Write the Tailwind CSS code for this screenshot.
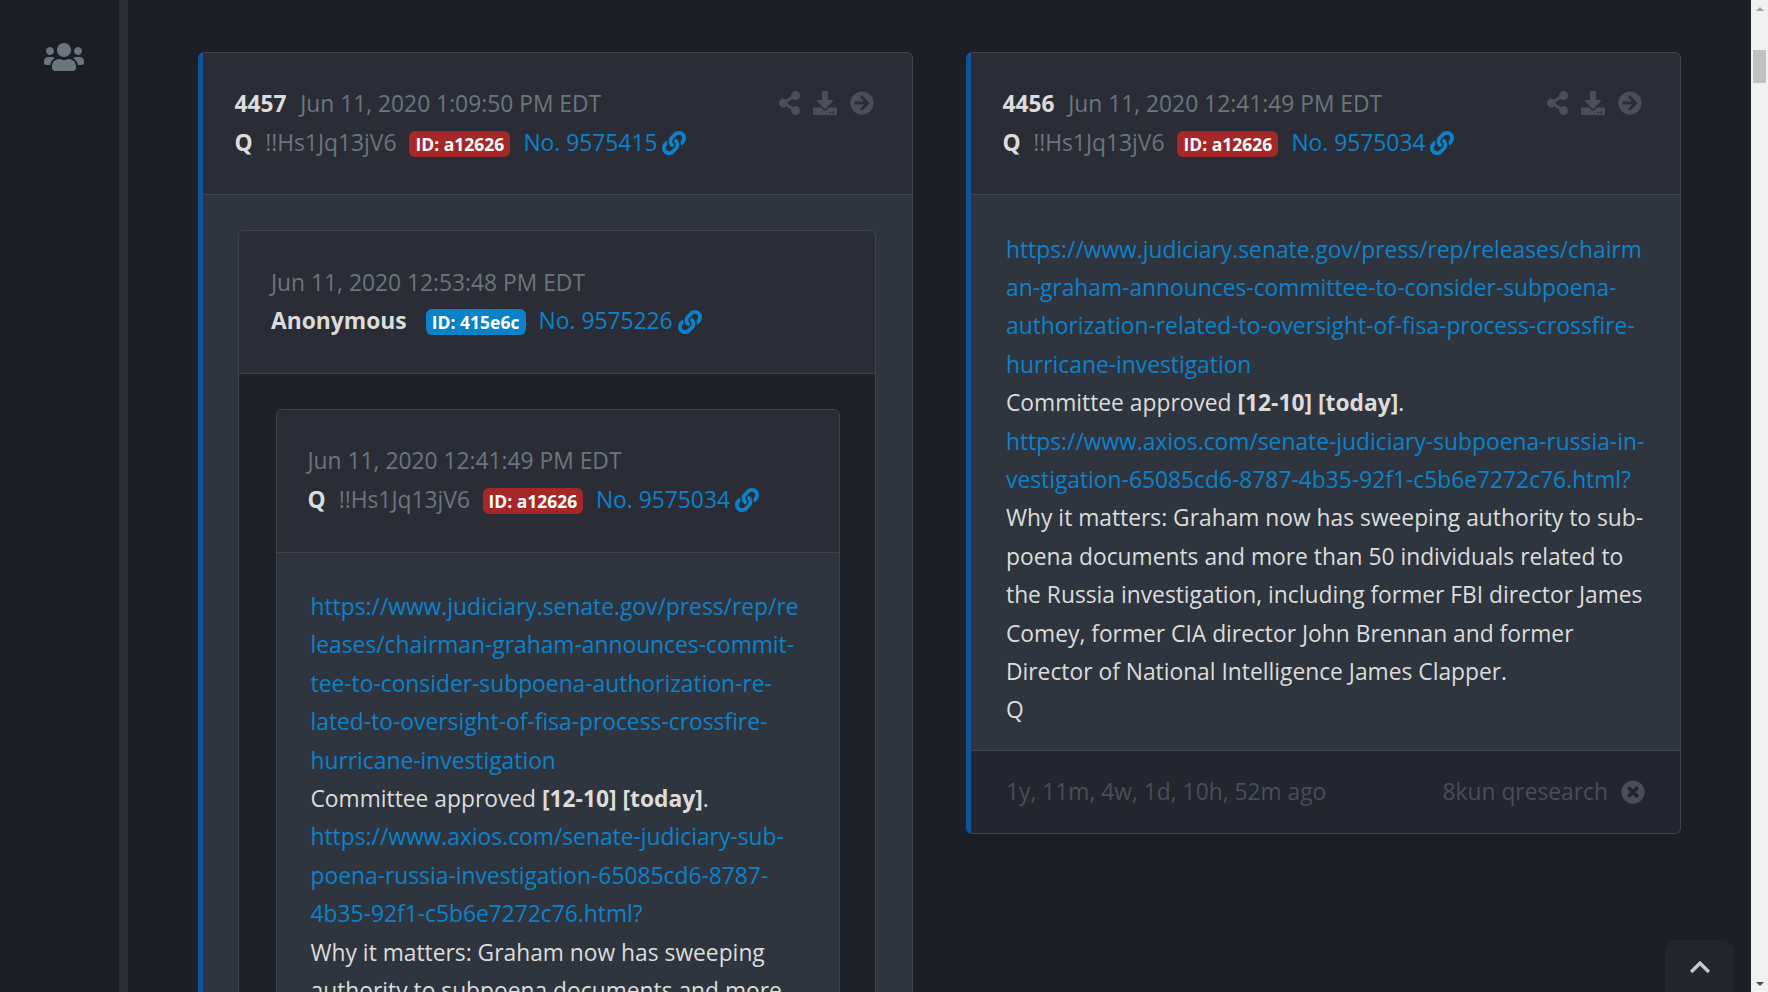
<!DOCTYPE html>
<html lang="en">
<head>
    <meta charset="UTF-8">
    <title>Q posts</title>
    <script src="https://cdn.jsdelivr.net/npm/@tailwindcss/browser@4"></script>
</head>
<body class="h-screen overflow-hidden bg-[#1c1f26] font-['Open_Sans',sans-serif] text-[22.8px] leading-[38.4px] text-[#dcdcdc]">
    <svg class="hidden">
        <symbol id="i-users" viewBox="0 0 640 512"><path fill="currentColor" d="M96 224c35.3 0 64-28.7 64-64s-28.7-64-64-64-64 28.7-64 64 28.7 64 64 64zm448 0c35.3 0 64-28.7 64-64s-28.7-64-64-64-64 28.7-64 64 28.7 64 64 64zm32 32h-64c-17.6 0-33.5 7.1-45.1 18.6 40.3 22.1 68.9 62 75.1 109.4h66c17.7 0 32-14.3 32-32v-32c0-35.3-28.7-64-64-64zm-256 0c61.9 0 112-50.1 112-112S381.9 32 320 32 208 82.1 208 144s50.1 112 112 112zm76.8 32h-8.3c-20.8 10-43.9 16-68.5 16s-47.6-6-68.5-16h-8.3C179.6 288 128 339.6 128 403.2V432c0 26.5 21.5 48 48 48h288c26.5 0 48-21.5 48-48v-28.8c0-63.6-51.6-115.2-115.2-115.2zm-223.7-13.4C161.5 263.1 145.6 256 128 256H64c-35.3 0-64 28.7-64 64v32c0 17.7 14.3 32 32 32h65.9c6.3-47.4 34.9-87.3 75.2-109.4z"/></symbol>
        <symbol id="i-share" viewBox="0 0 448 512"><path fill="currentColor" d="M352 320c-22.608 0-43.387 7.819-59.79 20.895l-102.486-64.054a96.551 96.551 0 0 0 0-41.683l102.486-64.054C308.613 184.181 329.392 192 352 192c53.019 0 96-42.981 96-96S405.019 0 352 0s-96 42.981-96 96c0 7.158.79 14.13 2.276 20.841L155.79 180.895C139.387 167.819 118.608 160 96 160c-53.019 0-96 42.981-96 96s42.981 96 96 96c22.608 0 43.387-7.819 59.79-20.895l102.486 64.054A96.301 96.301 0 0 0 256 416c0 53.019 42.981 96 96 96s96-42.981 96-96-42.981-96-96-96z"/></symbol>
        <symbol id="i-download" viewBox="0 0 512 512"><path fill="currentColor" d="M216 0h80c13.3 0 24 10.7 24 24v168h87.7c17.8 0 26.7 21.5 14.1 34.1L269.7 378.3c-7.5 7.5-19.8 7.5-27.3 0L90.1 226.1c-12.6-12.6-3.7-34.1 14.1-34.1H192V24c0-13.3 10.7-24 24-24zm296 376v112c0 13.3-10.7 24-24 24H24c-13.3 0-24-10.7-24-24V376c0-13.3 10.7-24 24-24h146.7l49 49c20.1 20.1 52.5 20.1 72.6 0l49-49H488c13.3 0 24 10.7 24 24zm-124 88c0-11-9-20-20-20s-20 9-20 20 9 20 20 20 20-9 20-20zm64 0c0-11-9-20-20-20s-20 9-20 20 9 20 20 20 20-9 20-20z"/></symbol>
        <symbol id="i-arrow" viewBox="0 0 512 512"><path fill="currentColor" d="M256 8c137 0 248 111 248 248S393 504 256 504 8 393 8 256 119 8 256 8zm-28.9 143.6l75.5 72.4H120c-13.3 0-24 10.7-24 24v16c0 13.3 10.7 24 24 24h182.6l-75.5 72.4c-9.7 9.3-9.9 24.8-.4 34.3l11 10.9c9.4 9.4 24.6 9.4 33.9 0L404.3 273c9.4-9.4 9.4-24.6 0-33.9L271.6 106.3c-9.4-9.4-24.6-9.4-33.9 0l-11 10.9c-9.5 9.6-9.3 25.1.4 34.4z"/></symbol>
        <symbol id="i-link" viewBox="0 0 512 512"><path fill="currentColor" d="M326.612 185.391c59.747 59.809 58.927 155.698.36 214.59-.11.12-.24.25-.36.37l-67.2 67.2c-59.27 59.27-155.699 59.262-214.96 0-59.27-59.26-59.27-155.7 0-214.96l37.106-37.106c9.84-9.84 26.786-3.3 27.294 10.606.648 17.722 3.826 35.527 9.69 52.721 1.986 5.822.567 12.262-3.783 16.612l-13.087 13.087c-28.026 28.026-28.905 73.66-1.155 101.96 28.024 28.579 74.086 28.749 102.325.51l67.2-67.19c28.191-28.191 28.073-73.757 0-101.83-3.701-3.694-7.429-6.564-10.341-8.569a16.037 16.037 0 0 1-6.947-12.606c-.396-10.567 3.348-21.456 11.698-29.806l21.054-21.055c5.521-5.521 14.182-6.199 20.584-1.731a152.482 152.482 0 0 1 20.522 17.197zM467.547 44.449c-59.261-59.262-155.69-59.27-214.96 0l-67.2 67.2c-.12.12-.25.25-.36.37-58.566 58.892-59.387 154.781.36 214.59a152.454 152.454 0 0 0 20.521 17.196c6.402 4.468 15.064 3.789 20.584-1.731l21.054-21.055c8.35-8.35 12.094-19.239 11.698-29.806a16.037 16.037 0 0 0-6.947-12.606c-2.912-2.005-6.64-4.875-10.341-8.569-28.073-28.073-28.191-73.639 0-101.83l67.2-67.19c28.239-28.239 74.3-28.069 102.325.51 27.75 28.3 26.872 73.934-1.155 101.96l-13.087 13.087c-4.35 4.35-5.769 10.79-3.783 16.612 5.864 17.194 9.042 34.999 9.69 52.721.509 13.906 17.454 20.446 27.294 10.606l37.106-37.106c59.271-59.259 59.271-155.699.001-214.959z"/></symbol>
        <symbol id="i-times" viewBox="0 0 512 512"><path fill="currentColor" d="M256 8C119 8 8 119 8 256s111 248 248 248 248-111 248-248S393 8 256 8zm121.6 313.1c4.7 4.7 4.7 12.3 0 17L338 377.6c-4.7 4.7-12.3 4.7-17 0L256 312l-65.1 65.6c-4.7 4.7-12.3 4.7-17 0L134.4 338c-4.7-4.7-4.7-12.3 0-17l65.6-65-65.6-65.1c-4.7-4.7-4.7-12.3 0-17l39.6-39.6c4.7-4.7 12.3-4.7 17 0l65 65.7 65.1-65.6c4.7-4.7 12.3-4.7 17 0l39.6 39.6c4.7 4.7 4.7 12.3 0 17L312 256l65.6 65.1z"/></symbol>
        <symbol id="i-chevron" viewBox="0 0 448 512"><path fill="currentColor" d="M240.971 130.524l194.343 194.343c9.373 9.373 9.373 24.569 0 33.941l-22.667 22.667c-9.357 9.357-24.522 9.375-33.901.04L224 227.495 69.255 381.516c-9.379 9.335-24.544 9.317-33.901-.04l-22.667-22.667c-9.373-9.373-9.373-24.569 0-33.941L207.03 130.525c9.372-9.373 24.568-9.373 33.941-.001z"/></symbol>
    </svg>

    <div class="flex h-screen">
        <!-- sidebar -->
        <aside class="w-[119px] shrink-0 bg-[#1b1e25] pt-[41px] pl-[9px] flex justify-center">
            <svg class="w-10 h-8 text-[#6c757d]"><use href="#i-users"/></svg>
        </aside>
        <div class="w-[9px] shrink-0 bg-[#2a2d35]"></div>

        <!-- posts -->
        <main class="flex-1 flex items-start gap-[53px] pl-[70px] pt-[52px] overflow-hidden">
            <article class="w-[715px] shrink-0 rounded-md border border-[#3f434c] border-l-[5px] border-l-[#0f539c] overflow-hidden">
                <header class="bg-[#2a2d35] border-b border-[#3f434c] pl-[31.5px] pr-[30px] py-8 h-[142px] flex justify-between">
                    <div>
                        <div class="flex items-center">
                            <span class="font-bold text-[#dcdcdc] mr-[13.5px]">4457</span>
                            <span class="text-[#6c757d]">Jun 11, 2020 1:09:50 PM EDT</span>
                        </div>
                        <div class="flex items-center mt-[0.6px]">
                            <span class="font-bold mr-[12.5px]">Q</span>
                            <span class="text-[#6c757d] mr-[13px]">!!Hs1Jq13jV6</span>
                            <span class="mt-[1px] h-[26px] w-[101px] rounded-md bg-[#a52727] text-white font-bold text-[17.5px] leading-[26px] text-center mr-[13px]">ID: a12626</span>
                            <a class="text-[#0b82cc] flex items-center gap-[5px]">No. 9575415 <svg class="w-6 h-6"><use href="#i-link"/></svg></a>
                        </div>
                    </div>
                    <div class="flex gap-[13px] h-[38px] items-center pr-[8px] -mt-[1px] text-[#4a4e5a]">
                        <svg class="w-[21px] h-6"><use href="#i-share"/></svg>
                        <svg class="w-6 h-6"><use href="#i-download"/></svg>
                        <svg class="w-6 h-6"><use href="#i-arrow"/></svg>
                    </div>
                </header>
                <div class="bg-[#2f353e] pl-[35px] pr-[36px] pt-[35px] h-[900px]">
                    <section class="rounded-md border border-[#3f434c]">
                        <header class="bg-[#2a2d35] border-b border-[#3f434c] rounded-t-md px-[32px] pt-[33px] h-[143px]">
                            <div class="text-[#6c757d]">Jun 11, 2020 12:53:48 PM EDT</div>
                            <div class="flex items-center">
                                <span class="font-bold mr-[19px]">Anonymous</span>
                                <span class="h-[26px] w-[100px] rounded-md bg-[#0a82c8] text-white font-bold text-[17.5px] leading-[26px] text-center mr-[13px]">ID: 415e6c</span>
                                <a class="text-[#0b82cc] flex items-center gap-[5px]">No. 9575226 <svg class="w-6 h-6"><use href="#i-link"/></svg></a>
                            </div>
                        </header>
                        <div class="bg-[#1e2128] pl-[36.5px] pr-[35px] pt-[35px] pb-8">
                            <section class="rounded-md border border-[#3f434c]">
                                <header class="bg-[#2a2d35] border-b border-[#3f434c] rounded-t-md px-[31px] pt-[32px] h-[143px]">
                                    <div class="text-[#6c757d]">Jun 11, 2020 12:41:49 PM EDT</div>
                                    <div class="flex items-center mt-[0.6px]">
                                        <span class="font-bold mr-[13px]">Q</span>
                                        <span class="text-[#6c757d] mr-[13px]">!!Hs1Jq13jV6</span>
                                        <span class="mt-[1px] h-[26px] w-[100px] rounded-md bg-[#a52727] text-white font-bold text-[17.5px] leading-[26px] text-center mr-[13px]">ID: a12626</span>
                                        <a class="text-[#0b82cc] flex items-center gap-[5px]">No. 9575034 <svg class="w-6 h-6"><use href="#i-link"/></svg></a>
                                    </div>
                                </header>
                                <div class="bg-[#2f353e] px-[34px] pt-[35px] pb-[35px]">
                                    <a class="text-[#0b82cc]">https://www.judiciary.senate.gov/press/rep/re<br>leases/chairman-graham-announces-commit-<br>tee-to-consider-subpoena-authorization-re-<br>lated-to-oversight-of-fisa-process-crossfire-<br>hurricane-investigation</a><br>
                                    Committee approved <b>[12-10] [today]</b>.<br>
                                    <a class="text-[#0b82cc]">https://www.axios.com/senate-judiciary-sub-<br>poena-russia-investigation-65085cd6-8787-<br>4b35-92f1-c5b6e7272c76.html?</a><br>
                                    Why it matters: Graham now has sweeping<br>authority to subpoena documents and more
                                </div>
                            </section>
                        </div>
                    </section>
                </div>
            </article>

            <article class="w-[715px] shrink-0 rounded-md border border-[#3f434c] border-l-[5px] border-l-[#0f539c] overflow-hidden">
                <header class="bg-[#2a2d35] border-b border-[#3f434c] pl-[31.5px] pr-[30px] py-8 h-[142px] flex justify-between">
                    <div>
                        <div class="flex items-center">
                            <span class="font-bold text-[#dcdcdc] mr-[13.5px]">4456</span>
                            <span class="text-[#6c757d]">Jun 11, 2020 12:41:49 PM EDT</span>
                        </div>
                        <div class="flex items-center mt-[0.6px]">
                            <span class="font-bold mr-[12.5px]">Q</span>
                            <span class="text-[#6c757d] mr-[13px]">!!Hs1Jq13jV6</span>
                            <span class="mt-[1px] h-[26px] w-[101px] rounded-md bg-[#a52727] text-white font-bold text-[17.5px] leading-[26px] text-center mr-[13px]">ID: a12626</span>
                            <a class="text-[#0b82cc] flex items-center gap-[5px]">No. 9575034 <svg class="w-6 h-6"><use href="#i-link"/></svg></a>
                        </div>
                    </div>
                    <div class="flex gap-[13px] h-[38px] items-center pr-[8px] -mt-[1px] text-[#4a4e5a]">
                        <svg class="w-[21px] h-6"><use href="#i-share"/></svg>
                        <svg class="w-6 h-6"><use href="#i-download"/></svg>
                        <svg class="w-6 h-6"><use href="#i-arrow"/></svg>
                    </div>
                </header>
                <div class="bg-[#2f353e] px-[35px] pt-[35.6px] pb-[20.4px]">
                    <a class="text-[#0b82cc]">https://www.judiciary.senate.gov/press/rep/releases/chairm<br>an-graham-announces-committee-to-consider-subpoena-<br>authorization-related-to-oversight-of-fisa-process-crossfire-<br>hurricane-investigation</a><br>
                    Committee approved <b>[12-10] [today]</b>.<br>
                    <a class="text-[#0b82cc]">https://www.axios.com/senate-judiciary-subpoena-russia-in-<br>vestigation-65085cd6-8787-4b35-92f1-c5b6e7272c76.html?</a><br>
                    Why it matters: Graham now has sweeping authority to sub-<br>poena documents and more than 50 individuals related to<br>the Russia investigation, including former FBI director James<br>Comey, former CIA director John Brennan and former<br>Director of National Intelligence James Clapper.<br>
                    Q
                </div>
                <footer class="bg-[#23262e] border-t border-[#3f434c] h-[83px] px-[35px] flex items-center justify-between text-[#4a4e5a]">
                    <span>1y, 11m, 4w, 1d, 10h, 52m ago</span>
                    <span class="flex items-center gap-[13px]">8kun qresearch <svg class="w-6 h-6"><use href="#i-times"/></svg></span>
                </footer>
            </article>
        </main>

        <!-- scrollbar -->
        <div class="w-[17px] shrink-0 bg-[#f1f1f1] flex flex-col items-center relative">
            <div class="h-[17px] flex items-center"><div class="border-x-4 border-x-transparent border-b-4 border-b-[#a3a3a3]"></div></div>
            <div class="mt-[33px] w-[13px] h-[33px] bg-[#c1c1c1]"></div>
            <div class="mt-auto h-[17px] flex items-center"><div class="border-x-4 border-x-transparent border-t-4 border-t-[#505050]"></div></div>
        </div>
    </div>

    <!-- back to top -->
    <button class="absolute left-[1665px] top-[940px] w-[69px] h-[52px] bg-[#23262d] rounded-t-xl text-[#c8c8c8] flex justify-center pt-[15px]">
        <svg class="w-5 h-6"><use href="#i-chevron"/></svg>
    </button>
</body>
</html>
